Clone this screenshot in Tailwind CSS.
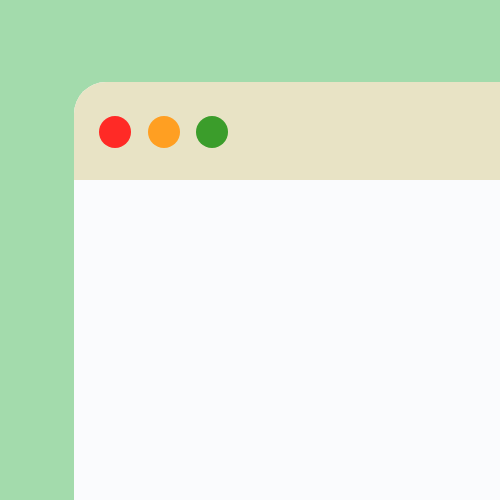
<!DOCTYPE html>
<html><head><script src="https://cdn.jsdelivr.net/npm/@tailwindcss/browser@4"></script></head>
<body class="m-0">
<div class="w-[500px] h-[500px] overflow-hidden bg-[#a3dbac] pt-[82px] pl-[74px]">
  <div class="w-[426px] h-[418px] flex flex-col rounded-tl-[32px] overflow-hidden bg-[#fafbfd]">
    <div class="h-[98px] shrink-0 bg-[#e8e3c5] flex items-center gap-[16.5px] pl-[25px] pt-[2px]">
      <div class="w-[32px] h-[32px] rounded-full bg-[#ff2a26]"></div>
      <div class="w-[32px] h-[32px] rounded-full bg-[#ff9f22]"></div>
      <div class="w-[32px] h-[32px] rounded-full bg-[#3b9d2b]"></div>
    </div>
  </div>
</div>
</body></html>
